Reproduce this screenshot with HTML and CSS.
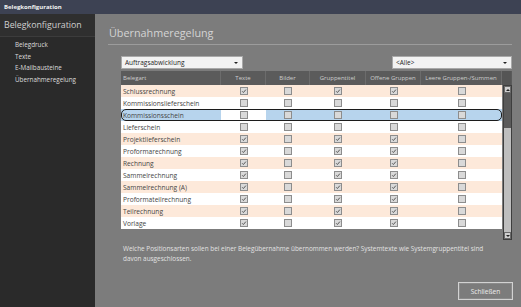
FILE: index.html
```html
<!DOCTYPE html>
<html lang="de">
<head>
<meta charset="utf-8">
<title>Belegkonfiguration</title>
<link rel="stylesheet" href="styles.css">
</head>
<body>
<div class="window">
  <div class="titlebar">Belegkonfiguration</div>
  <div class="body">
    <aside class="sidebar">
      <div class="side-head">Belegkonfiguration</div>
      <nav class="side-nav">
        <div class="side-item">Belegdruck</div>
        <div class="side-item">Texte</div>
        <div class="side-item">E-Mailbausteine</div>
        <div class="side-item">Übernahmeregelung</div>
      </nav>
    </aside>
    <main class="main">
      <h1 class="page-title"><span>Übernahmeregelung</span></h1>
      <div class="content">
        <div class="filters">
          <div class="select select-wide"><span>Auftragsabwicklung</span><span class="caret"></span></div>
          <div class="select select-right"><span>&lt;Alle&gt;</span><span class="caret"></span></div>
        </div>
        <div class="grid">
          <div class="grid-head">
            <div class="hcell hcell-left">Belegart</div>
            <div class="hcell">Texte</div>
            <div class="hcell">Bilder</div>
            <div class="hcell">Gruppentitel</div>
            <div class="hcell">Offene Gruppen</div>
            <div class="hcell">Leere Gruppen-/Summen</div>
            <div class="hcell hcell-corner"></div>
          </div>
          <div class="grid-body">
            <div class="rows" id="rows"></div>
            <div class="scrollbar">
              <div class="sb-btn"><span class="sb-up"></span></div>
              <div class="sb-thumb"></div>
              <div class="sb-track"></div>
              <div class="sb-btn"><span class="sb-down"></span></div>
            </div>
          </div>
        </div>
        <p class="hint">Welche Positionsarten sollen bei einer Belegübernahme übernommen werden? Systemtexte wie Systemgruppentitel sind<br>davon ausgeschlossen.</p>
        <div class="actions"><button class="btn">Schließen</button></div>
      </div>
    </main>
  </div>
</div>
<script src="app.js"></script>
</body>
</html>
```

FILE: app.js
```js
const data = [
  ["Schlussrechnung", [1,0,1,1,0]],
  ["Kommissionslieferschein", [0,0,0,0,0]],
  ["Kommissionsschein", [0,0,0,0,0], true],
  ["Lieferschein", [0,0,0,0,0]],
  ["Projektlieferschein", [1,0,1,1,0]],
  ["Proformarechnung", [1,0,1,1,0]],
  ["Rechnung", [1,0,1,1,0]],
  ["Sammelrechnung", [1,0,1,1,0]],
  ["Sammelrechnung (A)", [1,0,1,1,0]],
  ["Proformateilrechnung", [1,0,1,1,0]],
  ["Teilrechnung", [1,0,1,1,0]],
  ["Vorlage", [1,0,1,1,0]]
];
const tick = '<svg viewBox="0 0 8 8" width="8" height="8"><path d="M2.2 4.3 L3.4 5.5 L5.9 2.6" fill="none" stroke="#4a4a4a" stroke-width="0.9"/></svg>';
const rows = document.getElementById('rows');
data.forEach((d, i) => {
  const row = document.createElement('div');
  row.className = 'row' + (i % 2 === 0 ? ' row-alt' : '') + (d[2] ? ' row-sel' : '');
  let html = '<div class="cell cell-name">' + d[0] + '</div>';
  d[1].forEach((v, j) => {
    html += '<div class="cell' + (d[2] && j === 0 ? ' cell-focus' : '') + '"><span class="cb">' + (v ? tick : '') + '</span></div>';
  });
  row.innerHTML = html;
  rows.appendChild(row);
});
```

FILE: styles.css
```css
* { box-sizing: border-box; }
html, body { margin: 0; padding: 0; }
body {
  width: 521px;
  height: 307px;
  overflow: hidden;
  font-family: "Open Sans", "Noto Sans", sans-serif;
  background: #7c7c7c;
}
.window {
  width: 521px;
  height: 307px;
  display: flex;
  flex-direction: column;
}
.titlebar {
  height: 14px;
  flex: none;
  background: #3d4253;
  color: #f2f2f2;
  font-size: 6px;
  font-weight: 700;
  line-height: 14px;
  padding-left: 4px;
}
.body {
  flex: 1;
  display: flex;
  min-height: 0;
}
.sidebar {
  width: 95px;
  flex: none;
  background: #2a2a2a;
}
.side-head {
  height: 23px;
  background: #2f2f2f;
  border-bottom: 1px solid #3c3c3c;
  color: #cfcfcf;
  font-size: 8.8px;
  line-height: 22px;
  padding-left: 4px;
  white-space: nowrap;
}
.side-nav {
  padding: 2px 0 0 15px;
  display: flex;
  flex-direction: column;
}
.side-item {
  color: #dcdcdc;
  font-size: 6.3px;
  line-height: 11.7px;
  white-space: nowrap;
}
.main {
  flex: 1;
  display: flex;
  flex-direction: column;
  padding: 0 10px 0 13px;
  background: #7c7c7c;
}
.page-title {
  margin: 0;
  padding: 11px 0 3px 1px;
  font-size: 10.8px;
  font-weight: 400;
  line-height: 16px;
  color: #d4d4d4;
  border-bottom: 1px solid #9c9c9c;
  height: 31px;
  flex: none;
}
.content {
  flex: 1;
  display: flex;
  flex-direction: column;
  padding-left: 13px;
}
.filters {
  margin-top: 11px;
  height: 13px;
  display: flex;
  justify-content: space-between;
  flex: none;
}
.select {
  height: 13px;
  background: #f3f3f3;
  border: 1px solid #a9a9a9;
  color: #1e1e1e;
  font-size: 6.5px;
  line-height: 11px;
  padding-left: 3px;
  display: flex;
  justify-content: space-between;
  align-items: center;
}
.select-wide { width: 122px; }
.select-right { width: 120px; }
.caret {
  width: 0;
  height: 0;
  border-left: 2px solid transparent;
  border-right: 2px solid transparent;
  border-top: 2px solid #222;
  margin-right: 4px;
}
.grid {
  margin-top: 2px;
  flex: none;
}
.grid-head {
  height: 14px;
  display: grid;
  grid-template-columns: 100px 45px 44px 56px 55px 81px 9px;
  background: #5b5b5b;
}
.hcell {
  color: #cdcdcd;
  font-size: 6px;
  line-height: 14px;
  text-align: center;
  border-right: 1px solid #6c6c6c;
  white-space: nowrap;
  overflow: hidden;
}
.hcell-left { text-align: left; padding-left: 2px; }
.hcell-corner { border-right: 0; background: #555; }
.grid-body {
  display: flex;
  height: 155px;
}
.rows {
  width: 381px;
  display: flex;
  flex-direction: column;
}
.row {
  height: 12px;
  display: grid;
  grid-template-columns: 100px 45px 44px 56px 55px 81px;
  background: #ffffff;
  position: relative;
}
.row-alt { background: #fde9da; }
.row-sel { background: #b7d4ed; }
.row-sel::after {
  content: "";
  position: absolute;
  inset: 0;
  border: 1px solid #1c1c1c;
  border-radius: 5px;
  pointer-events: none;
}
.cell {
  display: flex;
  align-items: center;
  justify-content: center;
}
.cell-focus { background: #fff; margin: 1px 0; }
.cell-name {
  justify-content: flex-start;
  padding-left: 2px;
  color: #444;
  font-size: 6.6px;
  white-space: nowrap;
}
.cb {
  width: 8px;
  height: 8px;
  border: 1px solid #8d8d8d;
  background: #d9d9d9;
  display: block;
  position: relative;
}
.cb svg {
  position: absolute;
  left: -1px;
  top: -1px;
}
.scrollbar {
  width: 9px;
  margin-left: 1px;
  display: flex;
  flex-direction: column;
  border: 1px solid #3e3e3e;
}
.sb-btn {
  height: 7px;
  background: #cfcfcf;
  border: 1px solid #6a6a6a;
  display: flex;
  align-items: center;
  justify-content: center;
  flex: none;
}
.sb-up {
  border-left: 2px solid transparent;
  border-right: 2px solid transparent;
  border-bottom: 2px solid #222;
}
.sb-down {
  border-left: 2px solid transparent;
  border-right: 2px solid transparent;
  border-top: 2px solid #222;
}
.sb-thumb {
  height: 35px;
  background: #5a5a5a;
  flex: none;
}
.sb-track {
  flex: 1;
  background: #bebebe;
}
.hint {
  margin: 4px 0 0;
  padding-left: 2px;
  color: #e2e2e2;
  font-size: 6.4px;
  line-height: 9.5px;
  white-space: nowrap;
}
.actions {
  margin-top: auto;
  padding-bottom: 7px;
  display: flex;
  justify-content: flex-end;
}
.btn {
  width: 55px;
  height: 18px;
  margin-right: -1px;
  background: transparent;
  border: 1px solid #d2d2d2;
  box-shadow: inset 0 0 0 1px rgba(255,255,255,0.12);
  color: #ececec;
  font-family: "Open Sans", "Noto Sans", sans-serif;
  font-size: 6.6px;
  padding: 0;
}
```
